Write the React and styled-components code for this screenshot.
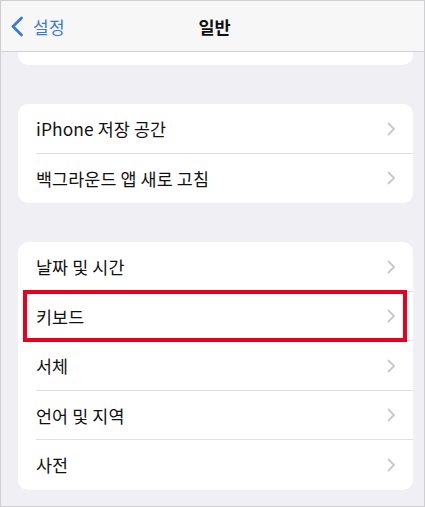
import React from "react";
import styled, { createGlobalStyle } from "styled-components";

const Global = createGlobalStyle`
  html, body { margin: 0; padding: 0; background: #ffffff; }
  body { font-family: "Noto Sans CJK KR", "Noto Sans", sans-serif; }
`;

const Frame = styled.div`
  width: 425px;
  height: 507px;
  box-sizing: border-box;
  border: 1px solid #cfcfd2;
  background: #efeff4;
  overflow: hidden;
  display: flex;
  flex-direction: column;
`;

const NavBar = styled.header`
  height: 50px;
  flex-shrink: 0;
  background: #f7f7f7;
  border-bottom: 1px solid #d2d2d4;
  display: grid;
  grid-template-columns: 1fr auto 1fr;
  align-items: center;
`;

const BackButton = styled.div`
  display: flex;
  align-items: center;
  gap: 9px;
  padding-left: 9px;
  color: #3b7bd8;
  font-size: 17px;
  letter-spacing: 0.3px;
`;

const Title = styled.div`
  font-size: 17.5px;
  font-weight: 600;
  color: #111;
  transform: translateX(2px);
`;

const Content = styled.main`
  display: flex;
  flex-direction: column;
  gap: 39px;
  padding: 0 11px 0 17px;
`;

const PartialCard = styled.div`
  height: 13px;
  background: #fff;
  border-radius: 0 0 10px 10px;
`;

const Card = styled.section`
  background: #fff;
  border-radius: 10px;
  display: flex;
  flex-direction: column;
`;

const Row = styled.div`
  position: relative;
  height: 49.5px;
  display: flex;
  align-items: center;
  justify-content: space-between;
  padding: 0 17px 0 18px;
  font-size: 17.4px;
  letter-spacing: 0.1px;
  color: #111;
  &:not(:last-child)::after {
    content: "";
    position: absolute;
    left: 18px;
    right: 0;
    bottom: 0;
    height: 1px;
    background: #e0e0e3;
  }
`;

const Highlight = styled.div`
  position: absolute;
  left: 5px;
  right: 6px;
  top: -2px;
  bottom: -1px;
  border: 4px solid #e8001c;
  box-sizing: border-box;
  pointer-events: none;
  z-index: 2;
`;

const Chevron = () => (
  <svg width="9" height="14" viewBox="0 0 9 14" fill="none">
    <path d="M1.5 1.5 L7 7 L1.5 12.5" stroke="#c8c8cb" strokeWidth="1.8" strokeLinecap="round" strokeLinejoin="round" />
  </svg>
);

const BackChevron = () => (
  <svg width="14" height="21" viewBox="0 0 14 21" fill="none">
    <path d="M11.5 2 L3 10.5 L11.5 19" stroke="#3b7bd8" strokeWidth="2.8" strokeLinecap="round" strokeLinejoin="round" />
  </svg>
);

const groups = [
  ["iPhone 저장 공간", "백그라운드 앱 새로 고침"],
  ["날짜 및 시간", "키보드", "서체", "언어 및 지역", "사전"],
];

export default function App() {
  return (
    <>
      <Global />
      <Frame>
        <NavBar>
          <BackButton>
            <BackChevron />
            <span>설정</span>
          </BackButton>
          <Title>일반</Title>
          <div />
        </NavBar>
        <Content>
          <PartialCard />
          {groups.map((items, gi) => (
            <Card key={gi}>
              {items.map((label) => (
                <Row key={label}>
                  <span>{label}</span>
                  <Chevron />
                  {label === "키보드" && <Highlight />}
                </Row>
              ))}
            </Card>
          ))}
        </Content>
      </Frame>
    </>
  );
}
